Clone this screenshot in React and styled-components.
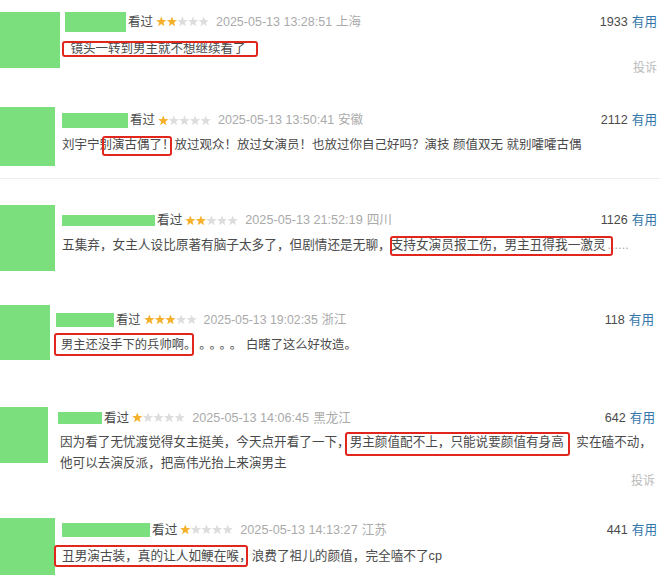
import React from "react";
import styled, { createGlobalStyle } from "styled-components";

const GlobalStyle = createGlobalStyle`
  html, body {
    margin: 0;
    padding: 0;
    background: #fff;
  }
  body {
    font-family: "Liberation Sans", "Noto Sans CJK SC", sans-serif;
    color: #4a4a4a;
  }
`;

const GREEN = "#7cdf7e";

const Feed = styled.div`
  width: 660px;
  overflow: hidden;
`;

const Entry = styled.div`
  display: flex;
  align-items: flex-start;
  box-sizing: border-box;
  height: ${(p) => p.$h}px;
  padding-top: ${(p) => p.$pt}px;
  border-bottom: ${(p) => (p.$rule ? "1px solid #ececec" : "none")};
  font-size: ${(p) => p.$fs}px;
`;

const Avatar = styled.div`
  flex: none;
  width: ${(p) => p.$w}px;
  height: ${(p) => p.$h}px;
  background: ${GREEN};
`;

const Body = styled.div`
  flex: 1;
  min-width: 0;
  margin: ${(p) => p.$mt}px ${(p) => p.$pr}px 0 ${(p) => p.$ml}px;
`;

const Header = styled.div`
  display: flex;
  align-items: center;
  height: ${(p) => p.$h}px;
  white-space: nowrap;
  line-height: 1;
`;

const NameBar = styled.div`
  flex: none;
  width: ${(p) => p.$w}px;
  height: 100%;
  background: ${GREEN};
  margin-right: 2px;
`;

const Watched = styled.span`
  color: #4a4a4a;
`;

const StarRow = styled.svg`
  flex: none;
  margin-left: 3px;
  margin-top: -1px;
`;

const Time = styled.span`
  color: #aaa;
  margin-left: 7px;
`;

const Place = styled.span`
  color: #aaa;
  margin-left: 4px;
`;

const Votes = styled.span`
  margin-left: auto;
  color: #4a4a4a;
  font-size: 12.6px;
`;

const Useful = styled.a`
  color: #3377aa;
  margin-left: 4px;
  text-decoration: none;
`;

const Content = styled.div`
  margin-top: ${(p) => p.$mt}px;
  padding-left: ${(p) => p.$indent || 0}px;
  line-height: ${(p) => p.$lh}px;
  white-space: nowrap;
`;

// red annotation frame drawn over a phrase; offsets move its edges
const Mark = styled.span`
  display: inline-block;
  position: relative;
  vertical-align: top;
  padding: 0 ${(p) => p.$pr || 0}px 0 ${(p) => p.$pl || 0}px;

  &::after {
    content: "";
    position: absolute;
    left: ${(p) => p.$l}px;
    right: ${(p) => p.$r}px;
    top: ${(p) => p.$t}px;
    bottom: ${(p) => p.$b}px;
    border: 2px solid #e0261d;
    border-radius: 3px;
  }
`;

const Trail = styled.span`
  color: #aaa;
  margin-left: 2px;
`;

const Dots = styled.span`
  letter-spacing: 4px;
  margin-left: 3px;
`;

const Report = styled.div`
  text-align: right;
  color: #bbb;
  font-size: 12px;
  line-height: ${(p) => p.$lh}px;
`;

function starPoints(cx, cy, R, r) {
  const pts = [];
  for (let i = 0; i < 10; i++) {
    const rad = i % 2 === 0 ? R : r;
    const a = -Math.PI / 2 + (i * Math.PI) / 5;
    pts.push(`${(cx + rad * Math.cos(a)).toFixed(2)},${(cy + rad * Math.sin(a)).toFixed(2)}`);
  }
  return pts.join(" ");
}

function Stars({ n }) {
  return (
    <StarRow width="53" height="11" viewBox="0 0 53 11">
      {[0, 1, 2, 3, 4].map((i) => (
        <polygon
          key={i}
          points={starPoints(5.3 + i * 10.6, 5.8, 5.4, 2.3)}
          fill={i < n ? "#f5b02c" : "#dddddd"}
        />
      ))}
    </StarRow>
  );
}

function Comment({ box, name, stars, time, place, votes, content, report, children }) {
  return (
    <Entry $h={box.h} $pt={box.pt} $fs={box.fs} $rule={box.rule}>
      <Avatar $w={box.aw} $h={box.ah} />
      <Body $mt={box.mt} $ml={box.ml} $pr={box.pr || 3}>
        <Header $h={name.h}>
          <NameBar $w={name.w} />
          <Watched>看过</Watched>
          <Stars n={stars} />
          <Time>{time}</Time>
          <Place>{place}</Place>
          <Votes>
            {votes}
            <Useful href="#">有用</Useful>
          </Votes>
        </Header>
        <Content $mt={content.mt} $lh={content.lh} $indent={content.indent}>
          {children}
        </Content>
        {report && <Report $lh={report}>投诉</Report>}
      </Body>
    </Entry>
  );
}

export default function App() {
  return (
    <Feed>
      <GlobalStyle />

      <Comment
        box={{ h: 95, pt: 12, fs: 12.5, aw: 60, ah: 56, mt: 0, ml: 5 }}
        name={{ w: 61, h: 20 }}
        stars={2}
        time="2025-05-13 13:28:51"
        place="上海"
        votes="1933"
        content={{ mt: 7, lh: 20 }}
        report={18}
      >
        <Mark $pl={5.5} $l={-3} $r={-12.5} $t={2} $b={2}>
          镜头一转到男主就不想继续看了
        </Mark>
      </Comment>

      <Comment
        box={{ h: 84, pt: 12, fs: 12.5, aw: 55, ah: 59, mt: 6, ml: 7, rule: true }}
        name={{ w: 66, h: 15 }}
        stars={1}
        time="2025-05-13 13:50:41"
        place="安徽"
        votes="2112"
        content={{ mt: 7, lh: 20 }}
      >
        刘宇宁
        <Mark $l={2.5} $r={2.5} $t={1} $b={-1}>
          别演古偶了！
        </Mark>
        放过观众！放过女演员！也放过你自己好吗？演技 颜值双无 就别嚯嚯古偶
      </Comment>

      <Comment
        box={{ h: 111, pt: 26, fs: 12.65, aw: 55, ah: 66, mt: 10, ml: 7 }}
        name={{ w: 93, h: 11 }}
        stars={2}
        time="2025-05-13 21:52:19"
        place="四川"
        votes="1126"
        content={{ mt: 9, lh: 20 }}
      >
        五集弃，女主人设比原著有脑子太多了，但剧情还是无聊，
        <Mark $l={-1} $r={-7} $t={1} $b={-1}>
          支持女演员报工伤，男主丑得我一激灵
        </Mark>
        <Trail>......</Trail>
      </Comment>

      <Comment
        box={{ h: 105, pt: 15, fs: 12.3, aw: 50, ah: 55, mt: 8, ml: 6, pr: 6 }}
        name={{ w: 58, h: 14 }}
        stars={3}
        time="2025-05-13 19:02:35"
        place="浙江"
        votes="118"
        content={{ mt: 6, lh: 24 }}
      >
        <Mark $pl={5} $l={-2} $r={2.3} $t={0} $b={1}>
          男主还没手下的兵帅啊。
        </Mark>
        <Dots>。。。。</Dots>
        白瞎了这么好妆造。
      </Comment>

      <Comment
        box={{ h: 105, pt: 12, fs: 12.6, aw: 48, ah: 56, mt: 5, ml: 10, pr: 5 }}
        name={{ w: 44, h: 12 }}
        stars={1}
        time="2025-05-13 14:06:45"
        place="黑龙江"
        votes="642"
        content={{ mt: 7.5, lh: 21, indent: 2 }}
        report={14}
      >
        因为看了无忧渡觉得女主挺美，今天点开看了一下，
        <Mark $pr={12.6} $l={-4.8} $r={6.6} $t={0.5} $b={-3.5}>
          男主颜值配不上，只能说要颜值有身高
        </Mark>
        实在磕不动，
        <br />
        他可以去演反派，把高伟光抬上来演男主
      </Comment>

      <Comment
        box={{ h: 75, pt: 18, fs: 12.65, aw: 55, ah: 57, mt: 5, ml: 7 }}
        name={{ w: 88, h: 14 }}
        stars={1}
        time="2025-05-13 14:13:27"
        place="江苏"
        votes="441"
        content={{ mt: 8, lh: 22 }}
      >
        <Mark $l={-8} $r={3.5} $t={0} $b={0}>
          丑男演古装，真的让人如鲠在喉，
        </Mark>
        浪费了祖儿的颜值，完全嗑不了cp
      </Comment>
    </Feed>
  );
}
